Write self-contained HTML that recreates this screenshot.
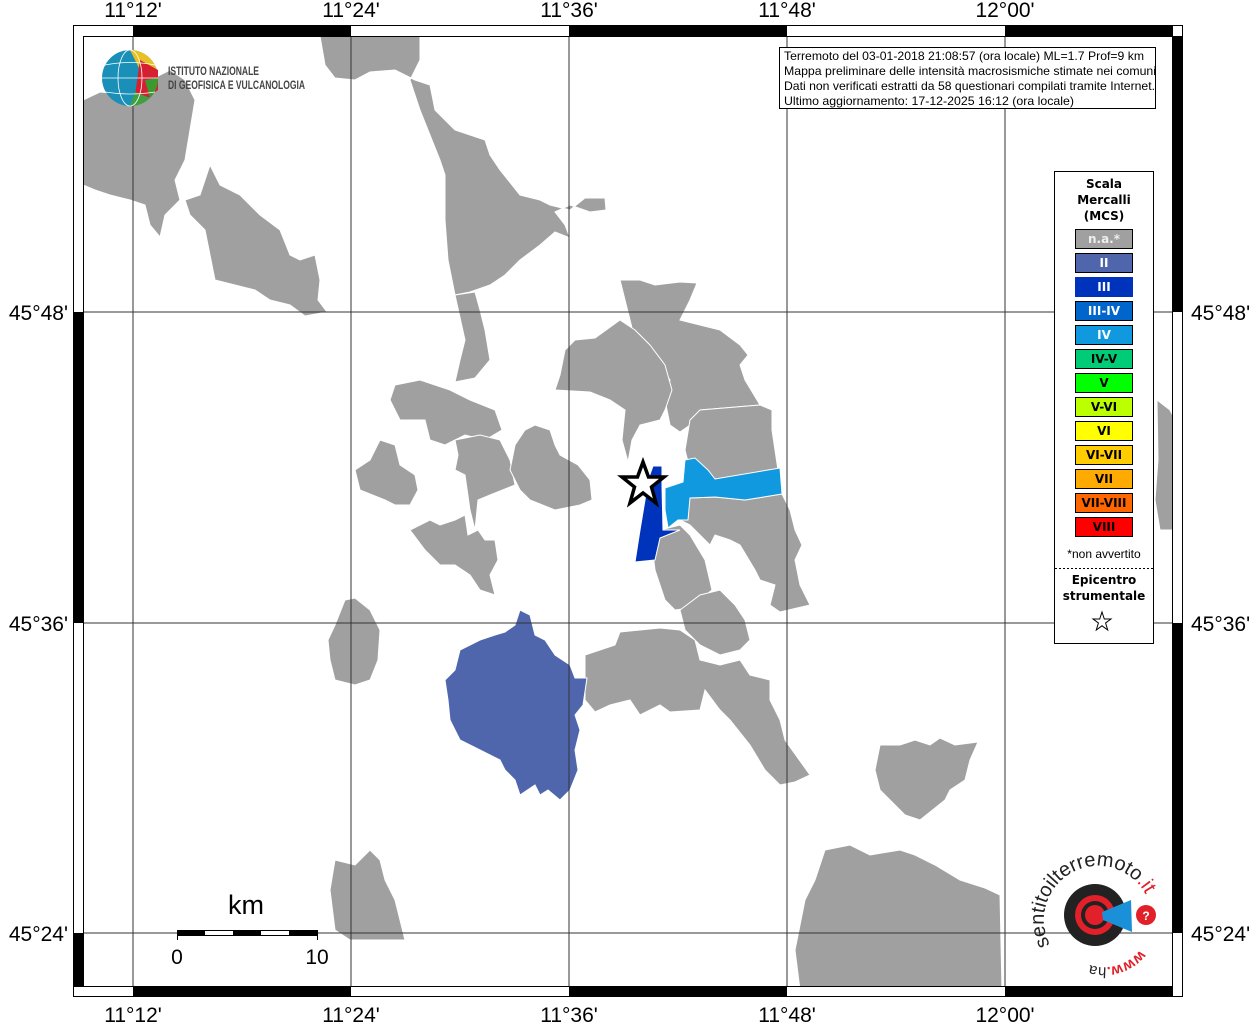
<!DOCTYPE html>
<html><head><meta charset="utf-8"><style>
html,body{margin:0;padding:0;background:#fff;width:1256px;height:1024px;overflow:hidden}
svg{display:block}
text{font-family:"Liberation Sans",sans-serif}
.lg{font-family:"DejaVu Sans",sans-serif;font-weight:bold;font-size:12px;text-anchor:middle}
</style></head><body>
<svg width="1256" height="1024" viewBox="0 0 1256 1024" xmlns="http://www.w3.org/2000/svg">
<defs><clipPath id="mc"><rect x="83" y="36" width="1090" height="951"/></clipPath></defs>
<g clip-path="url(#mc)" fill="#a0a0a0" stroke="#fff" stroke-width="1">
<polygon points="83,100 100,92 130,95 150,80 170,70 185,80 195,100 190,130 185,160 175,180 180,200 165,215 160,237 150,225 145,205 130,200 110,195 95,190 83,185"/>
<polygon points="210,165 220,185 240,195 260,215 280,230 290,255 300,260 315,255 320,280 318,300 327,312 305,316 290,305 270,300 255,290 235,285 215,280 210,255 205,230 190,215 185,200 200,195"/>
<polygon points="320,36 420,36 420,60 410,80 420,110 430,135 440,160 445,175 445,220 448,260 455,295 470,292 490,285 505,275 520,260 540,245 555,232 570,238 565,225 555,212 570,205 590,212 606,210 605,198 585,198 570,210 550,205 540,200 520,195 500,170 490,155 485,140 455,130 435,110 430,85 415,80 395,70 370,72 355,80 335,78 325,65"/>
<polygon points="455,295 465,340 460,360 455,382 475,378 490,360 485,330 480,310 475,292"/>
<polygon points="395,385 420,380 450,390 470,400 495,410 502,430 485,440 465,435 445,445 430,440 425,420 400,420 390,400"/>
<polygon points="455,440 480,435 500,440 510,460 515,485 490,495 478,500 475,530 470,510 465,475 455,470 458,455"/>
<polygon points="515,445 525,430 535,425 550,430 555,445 560,455 578,465 590,480 592,500 580,505 555,510 530,500 520,490 510,470"/>
<polygon points="380,440 395,445 400,465 415,475 418,490 410,505 395,505 385,500 360,490 355,470 370,460"/>
<polygon points="410,530 430,520 440,525 455,520 465,515 468,535 478,530 485,540 495,540 498,560 490,575 495,595 480,590 470,575 455,565 440,565 425,550"/>
<polygon points="345,600 355,598 370,610 380,630 378,660 370,680 355,685 335,680 330,660 328,640 335,625"/>
<polygon points="335,860 355,865 370,850 380,860 385,880 395,900 400,920 405,940 380,940 350,940 335,930 330,890"/>
<polygon points="620,280 640,280 655,285 680,282 697,283 690,300 680,320 700,325 720,330 740,345 748,355 740,365 745,380 760,405 700,410 690,425 680,432 670,425 665,400 670,380 650,350 635,340 630,320 625,300"/>
<polygon points="555,390 560,375 565,350 575,340 595,338 620,320 635,330 650,345 665,365 672,390 665,410 660,420 640,425 632,440 628,462 622,440 625,410 610,400 590,392"/>
<polygon points="690,420 700,410 760,405 772,410 772,430 775,450 778,470 715,479 690,470 685,450"/>
<polygon points="680,498 690,498 715,497 745,500 782,494 790,510 795,530 802,545 795,560 800,585 810,605 780,612 770,605 775,585 760,580 755,570 740,545 730,540 715,535 710,545 705,540 690,525 680,520"/>
<polygon points="660,530 680,525 690,535 705,560 712,590 690,608 675,610 665,600 655,570 652,545"/>
<polygon points="680,610 700,595 720,590 735,605 745,620 750,640 740,650 720,655 700,645 685,630"/>
<polygon points="585,655 600,650 615,645 620,632 640,630 660,628 680,630 695,640 700,660 720,665 740,660 750,675 770,680 770,700 780,720 785,740 810,775 795,782 780,785 765,770 750,745 730,720 720,710 705,690 700,710 670,712 660,705 640,715 630,700 610,705 595,712 585,700"/>
<polygon points="880,745 900,745 915,740 930,745 940,738 955,745 978,742 970,760 965,780 950,790 945,800 920,820 905,815 890,800 880,790 875,770"/>
<polygon points="825,850 850,845 870,855 900,850 915,855 935,865 960,880 985,888 1000,895 1002,990 800,990 795,950 805,900 815,880"/>
<polygon points="1157,400 1170,410 1175,420 1175,530 1160,530 1155,500 1158,460"/>
<polygon fill="#4f66ad" points="460,650 480,640 495,635 505,632 515,625 520,610 530,615 535,635 545,640 555,655 570,665 575,678 587,678 583,705 575,715 580,730 575,750 578,770 570,790 560,800 548,790 540,795 535,785 520,795 515,780 505,770 500,760 480,750 460,740 450,720 448,700 445,680 455,670"/>
<polygon fill="#1199e0" points="665,488 683,482 685,460 695,458 708,470 715,479 780,468 782,494 745,500 715,497 690,498 688,520 678,520 668,528 665,510"/>
<polygon fill="#0033bb" points="653,466 662,466 662,487 663,530 680,530 660,538 655,560 635,562 640,530 645,500 648,480"/>
</g>
<g stroke="#333" stroke-width="1" fill="none">
<line x1="133" y1="36" x2="133" y2="987"/><line x1="351" y1="36" x2="351" y2="987"/><line x1="569" y1="36" x2="569" y2="987"/><line x1="787" y1="36" x2="787" y2="987"/><line x1="1005" y1="36" x2="1005" y2="987"/>
<line x1="83" y1="312" x2="1173" y2="312"/><line x1="83" y1="623" x2="1173" y2="623"/><line x1="83" y1="933" x2="1173" y2="933"/>
</g>
<polygon points="643,462 648.5,477 664,477 651.5,487 656,503 643,493 630,503 634.5,487 622,477 637.5,477" fill="#fff" stroke="#000" stroke-width="3.5"/>
<rect x="73.5" y="25.5" width="1109" height="971" fill="none" stroke="#000"/>
<rect x="83.5" y="36.5" width="1089" height="950" fill="none" stroke="#000"/>
<g fill="#000">
<rect x="133" y="26" width="218" height="10"/><rect x="569" y="26" width="218" height="10"/><rect x="1005" y="26" width="168" height="10"/>
<rect x="133" y="987" width="218" height="10"/><rect x="569" y="987" width="218" height="10"/><rect x="1005" y="987" width="168" height="10"/>
<rect x="74" y="312" width="9" height="311"/><rect x="74" y="933" width="9" height="54"/>
<rect x="1173" y="36" width="9" height="276"/><rect x="1173" y="623" width="9" height="310"/>
</g>
<g font-size="21" text-anchor="middle">
<text x="133" y="17">11°12'</text><text x="351" y="17">11°24'</text><text x="569" y="17">11°36'</text><text x="787" y="17">11°48'</text><text x="1005" y="17">12°00'</text>
<text x="133" y="1022">11°12'</text><text x="351" y="1022">11°24'</text><text x="569" y="1022">11°36'</text><text x="787" y="1022">11°48'</text><text x="1005" y="1022">12°00'</text>
</g>
<g font-size="21"><text x="68" y="320" text-anchor="end">45°48'</text><text x="68" y="631" text-anchor="end">45°36'</text><text x="68" y="941" text-anchor="end">45°24'</text>
<text x="1191" y="320">45°48'</text><text x="1191" y="631">45°36'</text><text x="1191" y="941">45°24'</text></g>
<g>
<circle cx="130" cy="78" r="28" fill="#1a8fb8"/>
<path d="M130,50 A28,28 0 0 1 158,78 L145,80 Z" fill="#e8c020"/>
<path d="M140,60 L158,70 L158,90 L145,100 L135,95 Z" fill="#d42030"/>
<path d="M145,80 L158,78 A28,28 0 0 1 150,98 Z" fill="#3a9a30"/>
<path d="M150,98 A28,28 0 0 1 130,106 L135,92 Z" fill="#40a040"/>
<g stroke="#fff" stroke-width="0.8" fill="none"><ellipse cx="130" cy="78" rx="12" ry="28"/><line x1="102" y1="78" x2="158" y2="78"/><path d="M105,65 Q130,60 155,65 M105,92 Q130,96 155,92"/></g>
<text x="168" y="75" font-size="12" font-weight="bold" fill="#444" textLength="91" lengthAdjust="spacingAndGlyphs">ISTITUTO NAZIONALE</text>
<text x="168" y="89" font-size="12" font-weight="bold" fill="#444" textLength="137" lengthAdjust="spacingAndGlyphs">DI GEOFISICA E VULCANOLOGIA</text>
</g>
<rect x="779.5" y="47.5" width="376" height="61" fill="#fff" stroke="#000"/>
<g font-size="12"><text x="784" y="60" textLength="360" lengthAdjust="spacingAndGlyphs">Terremoto del 03-01-2018 21:08:57 (ora locale) ML=1.7 Prof=9 km</text>
<text x="784" y="75" textLength="372" lengthAdjust="spacingAndGlyphs">Mappa preliminare delle intensità macrosismiche stimate nei comuni</text>
<text x="784" y="90" textLength="371" lengthAdjust="spacingAndGlyphs">Dati non verificati estratti da 58 questionari compilati tramite Internet.</text>
<text x="784" y="105" textLength="290" lengthAdjust="spacingAndGlyphs">Ultimo aggiornamento: 17-12-2025 16:12 (ora locale)</text></g>
<rect x="1054.5" y="171.5" width="99" height="472" fill="#fff" stroke="#000"/>
<text class="lg" x="1104" y="188">Scala</text><text class="lg" x="1104" y="204">Mercalli</text><text class="lg" x="1104" y="220">(MCS)</text>
<g stroke="#000" stroke-width="1">
<rect x="1075.5" y="229.5" width="57" height="19" fill="#a0a0a0"/>
<rect x="1075.5" y="253.5" width="57" height="19" fill="#4f66ad"/>
<rect x="1075.5" y="277.5" width="57" height="19" fill="#0033bb" stroke="#0033bb"/>
<rect x="1075.5" y="301.5" width="57" height="19" fill="#0066cc"/>
<rect x="1075.5" y="325.5" width="57" height="19" fill="#1199e0"/>
<rect x="1075.5" y="349.5" width="57" height="19" fill="#00cc77"/>
<rect x="1075.5" y="373.5" width="57" height="19" fill="#00ff00"/>
<rect x="1075.5" y="397.5" width="57" height="19" fill="#bbff00"/>
<rect x="1075.5" y="421.5" width="57" height="19" fill="#ffff00"/>
<rect x="1075.5" y="445.5" width="57" height="19" fill="#ffcc00"/>
<rect x="1075.5" y="469.5" width="57" height="19" fill="#ffaa00"/>
<rect x="1075.5" y="493.5" width="57" height="19" fill="#ff6600"/>
<rect x="1075.5" y="517.5" width="57" height="19" fill="#ff0000"/>
</g>
<text class="lg" x="1104" y="243" fill="#eee">n.a.*</text>
<text class="lg" x="1104" y="267" fill="#fff">II</text>
<text class="lg" x="1104" y="291" fill="#fff">III</text>
<text class="lg" x="1104" y="315" fill="#fff">III-IV</text>
<text class="lg" x="1104" y="339" fill="#fff">IV</text>
<text class="lg" x="1104" y="363">IV-V</text>
<text class="lg" x="1104" y="387">V</text>
<text class="lg" x="1104" y="411">V-VI</text>
<text class="lg" x="1104" y="435">VI</text>
<text class="lg" x="1104" y="459">VI-VII</text>
<text class="lg" x="1104" y="483">VII</text>
<text class="lg" x="1104" y="507">VII-VIII</text>
<text class="lg" x="1104" y="531">VIII</text>
<text x="1104" y="558" font-size="12" text-anchor="middle" font-family="DejaVu Sans,sans-serif">*non avvertito</text>
<line x1="1055" y1="568.5" x2="1153" y2="568.5" stroke="#000" stroke-dasharray="2,2"/>
<text class="lg" x="1104" y="584">Epicentro</text><text class="lg" x="1104" y="600">strumentale</text>
<polygon points="1102,612 1104.3,619 1111,619 1105.6,623 1107.7,630 1102,625.8 1096.3,630 1098.4,623 1093,619 1099.7,619" fill="#fff" stroke="#000"/>
<text x="246" y="914" font-size="27" text-anchor="middle">km</text>
<rect x="177.5" y="930.5" width="140" height="5" fill="#fff" stroke="#000"/>
<rect x="177" y="930" width="28" height="6"/><rect x="233" y="930" width="28" height="6"/><rect x="289" y="930" width="28" height="6"/>
<line x1="177.5" y1="930" x2="177.5" y2="940" stroke="#000"/><line x1="317.5" y1="930" x2="317.5" y2="940" stroke="#000"/>
<text x="177" y="964" font-size="21" text-anchor="middle">0</text><text x="317" y="964" font-size="21" text-anchor="middle">10</text>
<g>
<circle cx="1095" cy="915" r="31" fill="#222"/>
<circle cx="1095" cy="915" r="20" fill="#e2202a"/>
<circle cx="1095" cy="915" r="14" fill="#222"/>
<circle cx="1095" cy="915" r="10" fill="#e2202a"/>
<polygon points="1102,912 1131,900 1132,932 1103,920" fill="#1a90d8"/>
<circle cx="1146" cy="915" r="10" fill="#e2202a"/>
<text x="1146" y="920" font-size="12" fill="#fff" text-anchor="middle" font-weight="bold">?</text>
<path id="arc" d="M1050,945 A46,46 0 0 1 1146,895" fill="none"/>
<text font-size="20" fill="#222"><textPath href="#arc">sentitoilterremoto<tspan fill="#e2202a">.it</tspan></textPath></text>
<path id="arc2" d="M1140,950 A46,46 0 0 1 1090,965" fill="none"/>
<text font-size="15" fill="#e2202a" font-weight="bold"><textPath href="#arc2">www.<tspan fill="#222" font-weight="normal">hai</tspan></textPath></text>
</g>
</svg>
</body></html>
